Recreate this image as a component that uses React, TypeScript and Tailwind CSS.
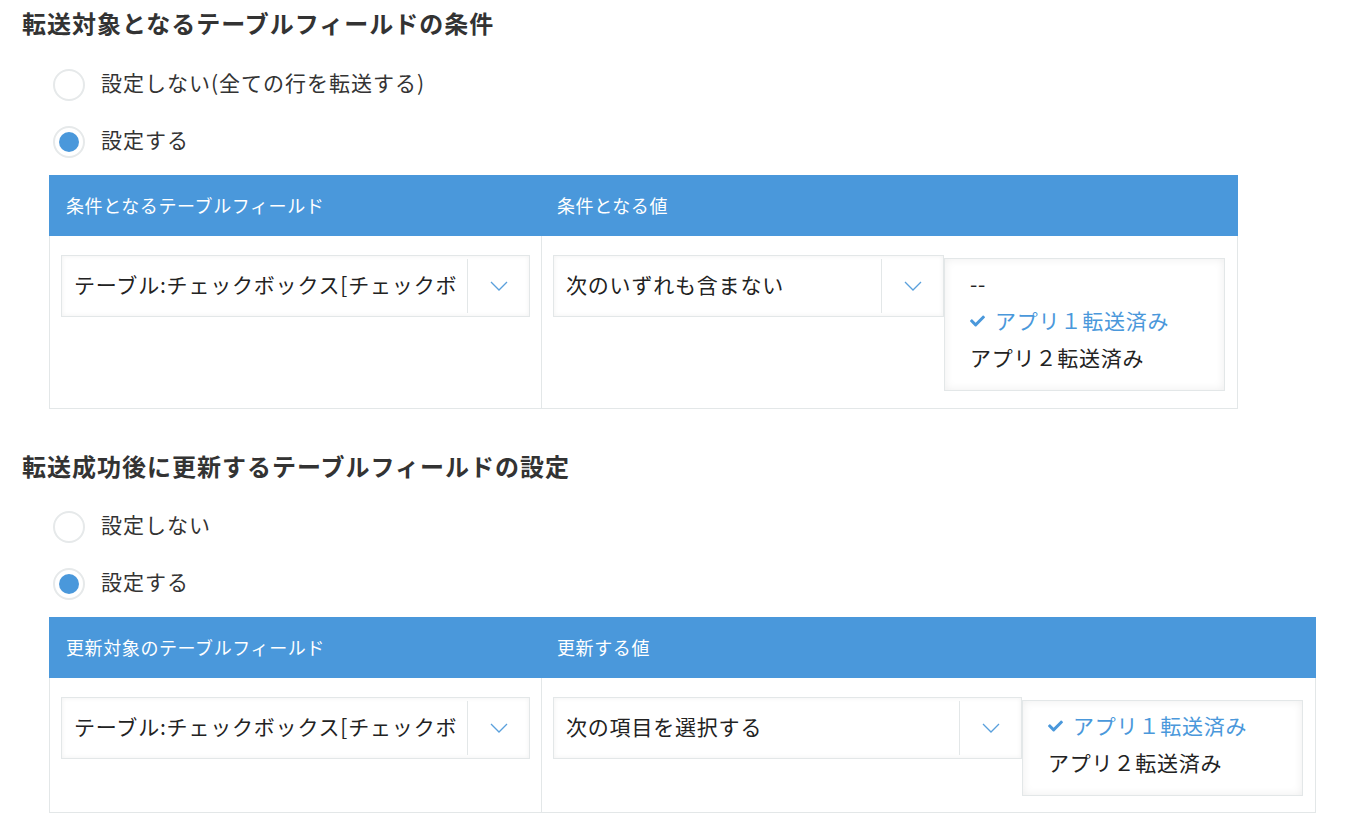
import React from "react";

const FONT = { fontFamily: '"Noto Sans CJK JP", "Noto Sans", sans-serif' };

function Radio({ checked, label }: { checked?: boolean; label: string }) {
  return (
    <div className="flex items-center h-[57px]">
      <span className="flex items-center justify-center w-[32px] h-[32px] rounded-full border-2 border-[#e6e9ea] bg-white">
        {checked && <span className="w-[20px] h-[20px] rounded-full bg-[#4a98db]" />}
      </span>
      <span className="ml-[16px] pb-[3px] text-[21px] tracking-[1px] text-[#333]">{label}</span>
    </div>
  );
}

function Chevron() {
  return (
    <svg width="18" height="10" viewBox="0 0 18 10" fill="none">
      <path d="M1 1l8 8 8-8" stroke="#5aa0dc" strokeWidth="1.3" />
    </svg>
  );
}

function CheckMark() {
  return (
    <svg width="15" height="13" viewBox="0 0 512 420" className="mr-[10px]">
      <path
        d="M173.9 410.6L7.5 244.2c-10-10-10-26.2 0-36.2l36.2-36.2c10-10 26.2-10 36.2 0L192 283.9 432.1 43.8c10-10 26.2-10 36.2 0l36.2 36.2c10 10 10 26.2 0 36.2L210.1 410.6c-10 10-26.2 10-36.2 0z"
        fill="#4a98db"
      />
    </svg>
  );
}

function Select({ text, width, textWidth }: { text: string; width: number; textWidth: number }) {
  return (
    <div
      className="flex h-[62px] border border-[#e3e7e8] bg-white shadow-[inset_0_0_5px_rgba(0,0,0,0.06)]"
      style={{ width }}
    >
      <div
        className="flex items-center pl-[12px] pb-[3px] overflow-hidden whitespace-nowrap text-[21px] tracking-[0.8px] text-[#222]"
        style={{ width: textWidth }}
      >
        {text}
      </div>
      <div className="flex-1 flex items-center justify-center my-[3px] border-l border-[#e3e7e8]">
        <Chevron />
      </div>
    </div>
  );
}

function MultiList({ items, width }: { items: { label: string; selected?: boolean }[]; width: number }) {
  return (
    <div
      className="mt-[3px] pt-[6px] pb-[14px] border border-[#e3e7e8] bg-white shadow-[inset_0_0_10px_rgba(0,0,0,0.07)]"
      style={{ width }}
    >
      {items.map((it) => (
        <div
          key={it.label}
          className={
            "flex items-center h-[37px] pl-[25px] text-[21px] tracking-[0.8px] " +
            (it.selected ? "text-[#4a98db]" : "text-[#222]")
          }
        >
          {it.selected && <CheckMark />}
          {it.label}
        </div>
      ))}
    </div>
  );
}

function ConditionTable({
  head1,
  head2,
  selectText,
  select2Width,
  select2TextWidth,
  items,
  listWidth,
  bodyPb,
}: {
  head1: string;
  head2: string;
  selectText: string;
  select2Width: number;
  select2TextWidth: number;
  items: { label: string; selected?: boolean }[];
  listWidth: number;
  bodyPb: string;
}) {
  return (
    <div className="ml-[49px] w-fit">
      <div className="flex h-[61px] bg-[#4a98db] text-white text-[18px] tracking-[0.6px]">
        <div className="w-[492px] flex items-center pl-[17px]">{head1}</div>
        <div className="flex-1 flex items-center pl-[16px]">{head2}</div>
      </div>
      <div className="flex border-x border-b border-[#e3e7e8]">
        <div className={"w-[492px] border-r border-[#e3e7e8] pt-[19px] pl-[11px] " + bodyPb}>
          <Select text="テーブル:チェックボックス[チェックボ" width={469} textWidth={405} />
        </div>
        <div className={"flex items-start pt-[19px] pl-[11px] pr-[12px] " + bodyPb}>
          <Select text={selectText} width={select2Width} textWidth={select2TextWidth} />
          <MultiList items={items} width={listWidth} />
        </div>
      </div>
    </div>
  );
}

export default function App() {
  return (
    <div className="bg-white min-h-screen pb-[20px]" style={FONT}>
      <h2 className="pl-[22px] h-[46px] flex items-center text-[24px] font-bold tracking-[1px] text-[#333]">
        転送対象となるテーブルフィールドの条件
      </h2>
      <div className="ml-[53px] mt-[10px]">
        <Radio label="設定しない(全ての行を転送する)" />
        <Radio checked label="設定する" />
      </div>
      <div className="mt-[5px]">
        <ConditionTable
          head1="条件となるテーブルフィールド"
          head2="条件となる値"
          selectText="次のいずれも含まない"
          select2Width={391}
          select2TextWidth={327}
          items={[
            { label: "--" },
            { label: "アプリ１転送済み", selected: true },
            { label: "アプリ２転送済み" },
          ]}
          listWidth={281}
          bodyPb="pb-[17px]"
        />
      </div>
      <h2 className="mt-[33px] pl-[22px] h-[48px] flex items-center text-[24px] font-bold tracking-[1px] text-[#333]">
        転送成功後に更新するテーブルフィールドの設定
      </h2>
      <div className="ml-[53px] mt-[8px]">
        <Radio label="設定しない" />
        <Radio checked label="設定する" />
      </div>
      <div className="mt-[5px]">
        <ConditionTable
          head1="更新対象のテーブルフィールド"
          head2="更新する値"
          selectText="次の項目を選択する"
          select2Width={469}
          select2TextWidth={405}
          items={[
            { label: "アプリ１転送済み", selected: true },
            { label: "アプリ２転送済み" },
          ]}
          listWidth={281}
          bodyPb="pb-[16px]"
        />
      </div>
    </div>
  );
}
